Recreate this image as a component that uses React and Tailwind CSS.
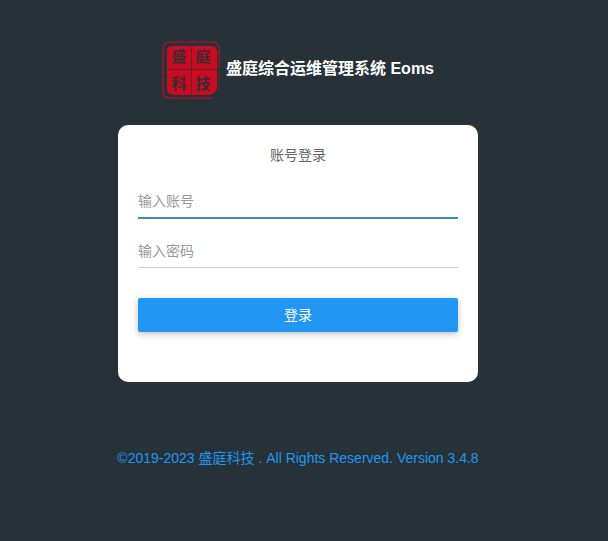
import React from "react";

function Logo() {
  return (
    <svg className="size-[58px] shrink-0" viewBox="0 0 58 58" fill="none" role="img" aria-label="盛庭科技">
      <path
        d="M50 57H8Q1 57 1 50V8Q1 1 8 1H50Q57 1 57 8V27"
        stroke="#9c1629"
        strokeWidth="1.5"
        strokeDasharray="23 .6 12 .4 31 .8"
      />
      <path d="M57 30V48" stroke="#7d1d2c" strokeWidth="1" strokeDasharray="5 1 3 2" />
      <path
        d="M10 5H49L53 6L55 10V48L52 52L48 54H10L6 52L5 48V10L6 6Z"
        fill="#c80c22"
      />
      <path d="M5 28.5H55M29.5 5V54" stroke="#66202d" strokeWidth="1" strokeDasharray="7 .5 4 .4" />
      <g
        className="font-['Noto_Sans_CJK_SC',sans-serif] font-bold"
        fill="#3d2931"
        fontSize="15"
        textAnchor="middle"
      >
        <text x="17" y="21">盛</text>
        <text x="41" y="21">庭</text>
        <text x="17" y="48">科</text>
        <text x="41" y="48">技</text>
      </g>
    </svg>
  );
}

function Field({ label, type, className }) {
  return (
    <input
      type={type}
      aria-label={label}
      placeholder={label}
      className={`block h-9 w-full bg-transparent pt-0.5 text-sm text-[#333] outline-none placeholder:text-[#999] ${className}`}
    />
  );
}

export default function App() {
  return (
    <div className="min-h-screen bg-[#263238] pt-[41px] pr-3 font-['Liberation_Sans','Noto_Sans_CJK_SC',sans-serif] text-sm">
      <header className="flex items-center justify-center gap-1.5">
        <Logo />
        <h1 className="pb-0.5 text-base leading-6 font-bold text-white">盛庭综合运维管理系统 Eoms</h1>
      </header>
      <main className="mx-auto mt-[26px] w-full max-w-[360px] rounded-[10px] bg-white px-5 pt-5 pb-[50px]">
        <h2 className="text-center leading-5 text-[#666]">账号登录</h2>
        <form className="mt-[18px]" onSubmit={(e) => e.preventDefault()}>
          <div className="flex flex-col gap-[13px]">
            <Field label="输入账号" type="text" className="border-b-2 border-[#3f8bc4]" />
            <Field label="输入密码" type="password" className="border-b border-[#d2d2d2]" />
          </div>
          <button
            type="submit"
            className="mt-[30px] block h-[34px] w-full rounded-[2px] bg-[#2196f3] text-sm text-white shadow-[0_2px_6px_rgba(0,0,0,0.25)]"
          >
            登录
          </button>
        </form>
      </main>
      <footer className="mt-[66px] text-center leading-5 text-[#2196f3]">
        ©2019-2023 盛庭科技 . All Rights Reserved. Version 3.4.8
      </footer>
    </div>
  );
}
